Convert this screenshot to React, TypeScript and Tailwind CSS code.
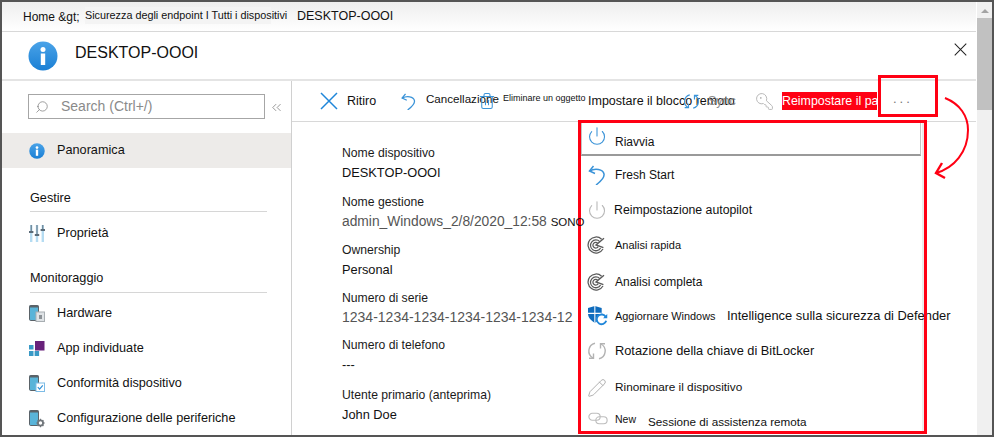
import { Power, Search, ChevronsLeft, KeyRound, Pencil, Trash2 } from 'lucide-react';
import { ReactNode } from 'react';

function InfoIcon({ size, id }: { size: number; id: string }) {
  return (
    <svg width={size} height={size} viewBox="0 0 30 30" className="shrink-0">
      <defs>
        <linearGradient id={id} x1="0" y1="0" x2="0" y2="1">
          <stop offset="0" stopColor="#4aa3e8" />
          <stop offset="1" stopColor="#1a7fd4" />
        </linearGradient>
      </defs>
      <circle cx="15" cy="15" r="14.5" fill={`url(#${id})`} />
      <rect x="12.8" y="12.5" width="4.4" height="11.5" fill="#fff" />
      <circle cx="15" cy="8.6" r="2.5" fill="#fff" />
    </svg>
  );
}

function CrossIcon({ size, color, width }: { size: number; color: string; width: number }) {
  return (
    <svg width={size} height={size} viewBox="0 0 18 18" stroke={color} strokeWidth={width} className="shrink-0">
      <path d="M1 1l16 16M17 1 1 17" />
    </svg>
  );
}

function CurlIcon({ size }: { size: number }) {
  return (
    <svg width={size} height={size} viewBox="0 0 20 20" fill="none" stroke="#3a93d8" strokeWidth="1.5" className="shrink-0">
      <path d="M2.5 6C8 3 16 4 17 9c.8 4-4 8-8 11" />
      <path d="M6.5 1 2.5 6 8 8.5" />
    </svg>
  );
}

function CycleIcon({ color, size }: { color: string; size: number }) {
  return (
    <svg width={size} height={size} viewBox="0 0 20 20" fill="none" stroke={color} strokeWidth="1.4" className="shrink-0">
      <path d="M8 2.2A8 8 0 0 0 6 17" />
      <path d="M12 17.8A8 8 0 0 0 14 3" />
      <path d="M6.5 12.5V17.2H2" />
      <path d="M13.5 7.5V2.8H18" />
    </svg>
  );
}

function LinkIcon() {
  return (
    <svg width="20" height="13" viewBox="0 0 23 14" fill="none" stroke="#bdbdbd" strokeWidth="1.3" className="shrink-0">
      <rect x="1" y="1" width="13" height="8" rx="4" />
      <rect x="9" y="5" width="13" height="8" rx="4" />
    </svg>
  );
}

function SlidersIcon() {
  return (
    <svg width="16" height="17" viewBox="0 0 16 17" className="shrink-0">
      <g fill="#b5dcf2">
        <rect x="1" y="0" width="2.4" height="17" />
        <rect x="6.8" y="0" width="2.4" height="17" />
        <rect x="12.6" y="0" width="2.4" height="17" />
      </g>
      <g fill="#5a6b78">
        <rect x="0" y="6" width="4.4" height="2" />
        <rect x="5.8" y="9" width="4.4" height="2" />
        <rect x="11.6" y="4" width="4.4" height="2" />
        <rect x="1.7" y="0" width="1" height="6" />
        <rect x="7.5" y="0" width="1" height="9" />
        <rect x="13.3" y="0" width="1" height="4" />
      </g>
    </svg>
  );
}

function DeviceIcon({ badge }: { badge: 'hardware' | 'check' | 'gear' }) {
  return (
    <svg width="16" height="18" viewBox="0 0 16 18" className="shrink-0">
      <rect x="0.5" y="0.5" width="9" height="15" rx="1.2" fill="#59b4d9" stroke="#5a6268" />
      <rect x="0.5" y="0.5" width="9" height="2" fill="#5a6268" />
      {badge === 'hardware' && (
        <g>
          <rect x="7" y="7" width="8.5" height="9.5" fill="#dfe3e6" stroke="#a8aeb2" />
          <rect x="10" y="10" width="3" height="4" fill="#8c9297" />
        </g>
      )}
      {badge === 'check' && (
        <g>
          <rect x="7" y="8" width="8.5" height="8.5" fill="#fff" stroke="#7dbce6" />
          <path d="M8.8 12.2l1.8 1.9 3.2-3.8" fill="none" stroke="#2f8fd6" strokeWidth="1.2" />
        </g>
      )}
      {badge === 'gear' && (
        <g>
          <circle cx="11.5" cy="13" r="2.6" fill="#fff" stroke="#70767b" strokeWidth="1.8" />
          <path d="M11.5 8.8v1.5M11.5 15.8v1.5M7.2 13h1.5M14.3 13h1.5M8.6 10.1l1 1M13.4 15l1 1M14.4 10.1l-1 1M9.6 15l-1 1" stroke="#70767b" strokeWidth="1.2" />
        </g>
      )}
    </svg>
  );
}

function AppsIcon() {
  return (
    <svg width="16" height="16" viewBox="0 0 16 16" className="shrink-0">
      <rect x="6" y="0" width="9.5" height="9.5" fill="#68217a" />
      <rect x="0" y="4" width="4.5" height="4.5" fill="#3999c6" />
      <rect x="0" y="10" width="4.5" height="5" fill="#3999c6" />
      <rect x="5.6" y="10" width="4.5" height="5" fill="#3999c6" />
    </svg>
  );
}

function ScanIcon() {
  return (
    <svg width="18" height="18" viewBox="0 0 18 18" fill="none" stroke="#5a5a5a" strokeWidth="1.25" className="shrink-0">
      <path d="M14.6 3.2A8 8 0 1 0 16 13" />
      <path d="M12.8 5.6A5.4 5.4 0 1 0 13.6 12" />
      <path d="M10.8 7.4A2.8 2.8 0 1 0 11.2 10.6" />
      <path d="M17 2.2 9 9l7.4 2.6" strokeWidth="1.4" />
    </svg>
  );
}

function ShieldIcon() {
  return (
    <svg width="22" height="20" viewBox="0 0 20 19" className="shrink-0">
      <path d="M0.5 2 7 0l6.5 2v5c0 4.5-3 7-6.5 9C3.5 14 0.5 11.5 0.5 7z" fill="#0f6cbd" />
      <path d="M7 0v16M0.5 7h13" stroke="#fff" strokeWidth="1" />
      <circle cx="13.5" cy="12.5" r="5" fill="#fff" />
      <path d="M17.4 10.4a4.6 4.6 0 1 0 .4 3.6" fill="none" stroke="#1f86d9" strokeWidth="1.8" />
      <path d="M18.8 7.6v4h-4z" fill="#1f86d9" />
    </svg>
  );
}

function NavRow({ icon, label, className }: { icon: ReactNode; label: string; className: string }) {
  return (
    <div className={`flex items-center h-[35px] pl-[27px] ${className}`}>
      <span className="w-[28px] flex items-center shrink-0">{icon}</span>
      <span className="whitespace-nowrap">{label}</span>
    </div>
  );
}

function SectionHead({ label, className }: { label: string; className: string }) {
  return (
    <div className={`ml-[28px] w-[237px] border-b border-[#d6d6d6] ${className}`}>
      {label}
    </div>
  );
}

function Field({ label, value, className }: { label: string; value: ReactNode; className: string }) {
  return (
    <div className={className}>
      <div className="h-[19px] leading-[19px] text-[12.2px] text-[#1a1a1a] whitespace-nowrap">{label}</div>
      <div className="h-[19px] leading-[19px] whitespace-nowrap">{value}</div>
    </div>
  );
}

function MenuRow({ icon, h, className, children }: { icon: ReactNode; h: string; className?: string; children: ReactNode }) {
  return (
    <div className={`flex items-center ${h} ${className ?? 'pl-[6px]'}`}>
      <span className="w-[28px] shrink-0 flex items-center">{icon}</span>
      {children}
    </div>
  );
}

export default function App() {
  return (
    <div
      className="relative w-[994px] h-[437px] overflow-hidden bg-white border-2 border-[#555] flex text-[#111]"
      style={{ fontFamily: '"Liberation Sans", Arial, sans-serif' }}
    >
      <div className="w-[974px] shrink-0 flex flex-col">
        {/* Breadcrumb */}
        <div className="h-[30px] shrink-0 flex items-center border-b border-[#d8d8d8] pl-[21px] bg-gradient-to-b from-[#eeeeee] to-white text-[12px]">
          <span className="w-[62px] shrink-0 whitespace-nowrap">Home &amp;gt;</span>
          <span className="w-[186px] shrink-0 h-[17px] leading-[17px] -mt-[3px] bg-[#f4f4f4] text-[10.8px] whitespace-nowrap">Sicurezza degli endpoint I Tutti i dispositivi</span>
          <span className="ml-[26px] text-[12.5px] whitespace-nowrap">DESKTOP-OOOI</span>
        </div>

        {/* Blade header */}
        <div className="h-[49px] shrink-0 flex items-center border-b-2 border-[#e4e4e4] pl-[26px]">
          <InfoIcon size={30} id="infoLarge" />
          <span className="ml-[17px] -mt-[6px] text-[16px] whitespace-nowrap">DESKTOP-OOOI</span>
          <span className="ml-auto mr-[9px] self-start mt-[11px]">
            <CrossIcon size={13} color="#222" width={1.4} />
          </span>
        </div>

        <div className="flex-1 flex min-h-0">
          {/* Sidebar */}
          <div className="w-[290px] shrink-0 border-r border-[#d0d0d0] text-[12.7px]">
            <div className="flex items-center mt-[13px]">
              <div className="ml-[26px] w-[237px] h-[25px] border border-[#a6a6a6] flex items-center pl-[6px] text-[#8a8a8a] text-[14px]">
                <Search size={14} strokeWidth={1.2} className="-scale-x-100 mr-[12px] text-[#777]" />
                Search (Ctrl+/)
              </div>
              <ChevronsLeft size={15} strokeWidth={1.2} className="ml-[4px] mt-[2px] text-[#777]" />
            </div>
            <NavRow icon={<InfoIcon size={16} id="infoSmall" />} label="Panoramica" className="mt-[14px] bg-[#edebe9]" />
            <SectionHead label="Gestire" className="mt-[21px] h-[23px]" />
            <NavRow icon={<SlidersIcon />} label="Proprietà" className="mt-[4px]" />
            <SectionHead label="Monitoraggio" className="mt-[18px] h-[24px]" />
            <NavRow icon={<DeviceIcon badge="hardware" />} label="Hardware" className="mt-[3px]" />
            <NavRow icon={<AppsIcon />} label="App individuate" className="" />
            <NavRow icon={<DeviceIcon badge="check" />} label="Conformità dispositivo" className="" />
            <NavRow icon={<DeviceIcon badge="gear" />} label="Configurazione delle periferiche" className="" />
          </div>

          {/* Main */}
          <div className="flex-1 min-w-0 flex flex-col">
            <div className="h-[41px] shrink-0 border-b border-[#d8d8d8] flex items-center text-[12.5px] whitespace-nowrap">
              <span className="ml-[28px] w-[27px] shrink-0"><CrossIcon size={18} color="#1f86d9" width={1.5} /></span>
              <span className="w-[53px] shrink-0">Ritiro</span>
              <span className="w-[26px] shrink-0"><CurlIcon size={17} /></span>
              <span className="w-[52px] shrink-0 -mt-[4px] text-[11.6px]">Cancellazione</span>
              <span className="w-[25px] shrink-0"><Trash2 size={18} strokeWidth={1.4} className="text-[#3c94d8]" /></span>
              <span className="w-[85px] shrink-0 -mt-[4px] text-[9px]">Eliminare un oggetto</span>
              <span className="w-[95px] shrink-0">Impostare il blocco remoto</span>
              <span className="w-[25px] shrink-0"><CycleIcon color="#3c94d8" size={17} /></span>
              <span className="w-[47px] shrink-0 text-[#8a8a8a]">Sync</span>
              <span className="w-[27px] shrink-0"><KeyRound size={19} strokeWidth={1.2} className="-scale-x-100 text-[#b5b5b5]" /></span>
              <span className="w-[95px] shrink-0 h-[18px] leading-[18px] overflow-hidden bg-[#ff0013] text-white text-[12.4px]">Reimpostare il pannello</span>
              <span className="ml-[16px] text-[#777] text-[13px] tracking-[3px] -mt-[5px]">...</span>
            </div>

            {/* Device properties */}
            <div className="pl-[50px] text-[12.8px] flex-1 min-h-0">
              <Field label="Nome dispositivo" value="DESKTOP-OOOI" className="mt-[22px]" />
              <Field
                label="Nome gestione"
                value={<span className="text-[#555] text-[13.8px]">admin_Windows_2/8/2020_12:58 <span className="relative z-10 text-[#111] text-[11.5px]">SONO</span></span>}
                className="mt-[11px]"
              />
              <Field label="Ownership" value="Personal" className="mt-[10px]" />
              <Field label="Numero di serie" value={<span className="text-[#555] text-[14px]">1234-1234-1234-1234-1234-1234-12</span>} className="mt-[10px]" />
              <Field label="Numero di telefono" value="---" className="mt-[9px]" />
              <Field label="Utente primario (anteprima)" value="John Doe" className="mt-[12px]" />
              <Field label="Enrolled by" value="" className="mt-[8px]" />
            </div>
          </div>
        </div>
      </div>

      {/* Scrollbar */}
      <div className="ml-[1px] w-[15px] shrink-0 bg-[#f0f0f0] flex flex-col items-center">
        <div className="mt-[7px] w-0 h-0 border-x-[4px] border-x-transparent border-b-[4px] border-b-[#a3a3a3]" />
        <div className="mt-[5px] w-full h-[92px] bg-[#c1c1c1]" />
      </div>

      {/* Overflow menu */}
      <div className="absolute left-[579px] top-[121px] w-[343px] h-[311px] bg-white border-r-2 border-[#ececec] text-[12px] whitespace-nowrap">
        <MenuRow
          h="h-[33px]"
          className="pl-[5px] mr-[1px] border-x border-[#c4c4c4] border-b-2 border-b-[#9a9a9a]"
          icon={<Power size={20} strokeWidth={1.3} className="text-[#3c94d8] -mt-[6px]" />}
        >
          <span className="mt-[6px]">Riavvia</span>
        </MenuRow>
        <MenuRow h="h-[38px]" icon={<CurlIcon size={20} />}>Fresh Start</MenuRow>
        <MenuRow h="h-[32px]" icon={<Power size={20} strokeWidth={1.3} className="text-[#b8b8b8]" />}>
          <span className="-ml-[1px] text-[12.3px]">Reimpostazione autopilot</span>
        </MenuRow>
        <MenuRow h="h-[38px]" icon={<ScanIcon />}><span className="text-[11px]">Analisi rapida</span></MenuRow>
        <MenuRow h="h-[36px]" icon={<ScanIcon />}><span className="text-[12px]">Analisi completa</span></MenuRow>
        <MenuRow h="h-[32px]" icon={<ShieldIcon />}>
          <span className="text-[10.9px] w-[112px] shrink-0">Aggiornare Windows</span>
          <span className="text-[12.9px]">Intelligence sulla sicurezza di Defender</span>
        </MenuRow>
        <MenuRow h="h-[38px]" icon={<CycleIcon color="#b3b3b3" size={20} />}>
          <span className="text-[12.8px]">Rotazione della chiave di BitLocker</span>
        </MenuRow>
        <MenuRow h="h-[36px]" icon={<Pencil size={20} strokeWidth={1.1} className="text-[#a8a8a8]" />}>
          <span className="text-[11.8px]">Rinominare il dispositivo</span>
        </MenuRow>
        <MenuRow h="h-[28px]" className="pl-[7px] items-start pt-[6px]" icon={<LinkIcon />}>
          <span className="text-[10.5px] w-[33px] shrink-0 -ml-[1px]">New</span>
          <span className="text-[11.7px] mt-[1px]">Sessione di assistenza remota</span>
        </MenuRow>
      </div>

      {/* Red callout round the menu */}
      <div className="absolute left-[576px] top-[118px] w-[349px] h-[314px] border-[3px] border-[#ff0013]" />

      {/* Red box on the ... button */}
      <div className="absolute left-[876px] top-[73px] w-[60px] h-[42px] border-[3px] border-[#ff0013]" />

      {/* Curved arrow */}
      <svg className="absolute left-[928px] top-[90px]" width="42" height="92" viewBox="0 0 42 92" fill="none" stroke="#ff0013" strokeWidth="2">
        <path d="M15 6C30 12 38 24 38 38 38 60 24 76 6 81" />
        <path d="M12 71 6 81 15 86" strokeWidth="2.4" />
      </svg>
    </div>
  );
}
